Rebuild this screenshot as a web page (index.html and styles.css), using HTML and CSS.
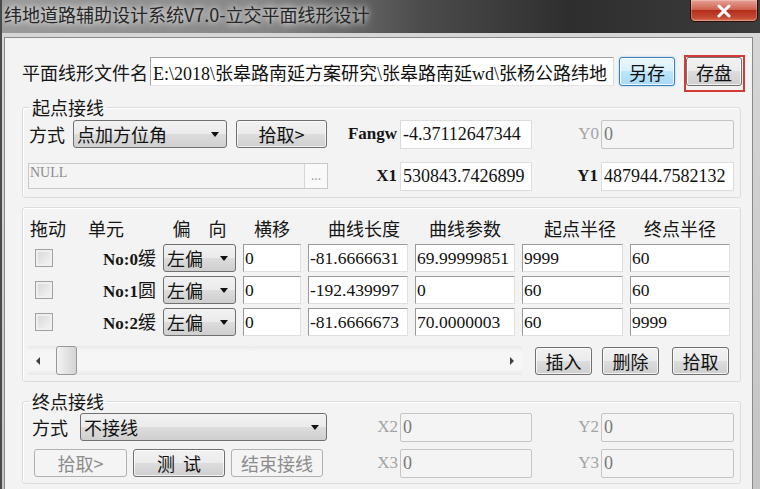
FILE: index.html
```html
<!DOCTYPE html>
<html lang="zh-CN">
<head>
    <meta charset="UTF-8">
    <title>纬地道路辅助设计系统V7.0-立交平面线形设计</title>
    <link rel="stylesheet" href="styles.css">
</head>
<body>
<div class="window">
    <div class="titlebar">
        <span class="title">纬地道路辅助设计系统V7.0-立交平面线形设计</span>
        <button class="close-btn">
            <svg width="16" height="14" viewBox="0 0 16 14"><path d="M3 2 L13 12 M13 2 L3 12" stroke="#fff" stroke-width="3" stroke-linecap="round"/></svg>
        </button>
    </div>
    <div class="frame">
        <div class="client">
            <div class="file-row">
                <label class="lbl" for="file">平面线形文件名</label>
                <input id="file" class="txt path" type="text" value="E:\2018\张皋路南延方案研究\张皋路南延wd\张杨公路纬地">
                <button class="btn hot">另存</button>
                <span class="mark"><button class="btn">存盘</button></span>
            </div>

            <fieldset class="group">
                <legend>起点接线</legend>
                <div class="grid start-grid">
                    <div class="left start-mode">
                        <span class="lbl">方式</span>
                        <div class="combo combo-start">
                            <select><option>点加方位角</option><option>不接线</option></select>
                        </div>
                        <button class="btn pick">拾取&gt;</button>
                    </div>
                    <label class="tag">Fangw</label>
                    <input class="txt num" type="text" value="-4.37112647344">
                    <label class="tag off">Y0</label>
                    <input class="txt num" type="text" value="0" disabled>

                    <div class="left">
                        <div class="null-field"><span class="null-text">NULL</span><span class="dots">...</span></div>
                    </div>
                    <label class="tag">X1</label>
                    <input class="txt num" type="text" value="530843.7426899">
                    <label class="tag">Y1</label>
                    <input class="txt num" type="text" value="487944.7582132">
                </div>
            </fieldset>

            <div class="group table-group">
                <div class="table-grid">
                    <div class="th th-left">拖动</div>
                    <div class="th th-unit">单元</div>
                    <div class="th">偏　向</div>
                    <div class="th">横移</div>
                    <div class="th th-shift">曲线长度</div>
                    <div class="th">曲线参数</div>
                    <div class="th th-shift2">起点半径</div>
                    <div class="th">终点半径</div>

                    <input class="check" type="checkbox" disabled>
                    <div class="unit"><span class="mono">No:0</span>缓</div>
                    <div class="combo"><select><option>左偏</option><option>右偏</option></select></div>
                    <input class="txt cell" type="text" value="0">
                    <input class="txt cell" type="text" value="-81.6666631">
                    <input class="txt cell" type="text" value="69.99999851">
                    <input class="txt cell" type="text" value="9999">
                    <input class="txt cell" type="text" value="60">

                    <input class="check" type="checkbox" disabled>
                    <div class="unit"><span class="mono">No:1</span>圆</div>
                    <div class="combo"><select><option>左偏</option><option>右偏</option></select></div>
                    <input class="txt cell" type="text" value="0">
                    <input class="txt cell" type="text" value="-192.439997">
                    <input class="txt cell" type="text" value="0">
                    <input class="txt cell" type="text" value="60">
                    <input class="txt cell" type="text" value="60">

                    <input class="check" type="checkbox" disabled>
                    <div class="unit"><span class="mono">No:2</span>缓</div>
                    <div class="combo"><select><option>左偏</option><option>右偏</option></select></div>
                    <input class="txt cell" type="text" value="0">
                    <input class="txt cell" type="text" value="-81.6666673">
                    <input class="txt cell" type="text" value="70.0000003">
                    <input class="txt cell" type="text" value="60">
                    <input class="txt cell" type="text" value="9999">
                </div>

                <div class="scroll-row">
                    <div class="hscroll">
                        <span class="arrow arrow-l"></span>
                        <span class="thumb"></span>
                        <span class="spacer"></span>
                        <span class="arrow arrow-r"></span>
                    </div>
                    <button class="btn small b-insert">插入</button>
                    <button class="btn small b-delete">删除</button>
                    <button class="btn small b-pick">拾取</button>
                </div>
            </div>

            <fieldset class="group end-group">
                <legend>终点接线</legend>
                <div class="grid end-grid">
                    <div class="left end-mode">
                        <span class="lbl">方式</span>
                        <div class="combo combo-end">
                            <select><option>不接线</option><option>点加方位角</option></select>
                        </div>
                    </div>
                    <label class="tag off">X2</label>
                    <input class="txt num" type="text" value="0" disabled>
                    <label class="tag off">Y2</label>
                    <input class="txt num" type="text" value="0" disabled>

                    <div class="left end-buttons">
                        <button class="btn wide" disabled>拾取&gt;</button>
                        <button class="btn wide test">测 试</button>
                        <button class="btn wide" disabled>结束接线</button>
                    </div>
                    <label class="tag off">X3</label>
                    <input class="txt num" type="text" value="0" disabled>
                    <label class="tag off">Y3</label>
                    <input class="txt num" type="text" value="0" disabled>
                </div>
            </fieldset>
        </div>
    </div>
</div>
</body>
</html>
```

FILE: styles.css
```css
* {
    box-sizing: border-box;
}
body {
    margin: 0;
    width: 760px;
    height: 489px;
    overflow: hidden;
    background: #3a3a3a;
    font-family: "Noto Sans CJK SC", sans-serif;
    color: #161616;
}
.window {
    width: 760px;
    height: 489px;
    overflow: hidden;
    display: flex;
    flex-direction: column;
    border-left: 2px solid #4a4a4a;
    background: linear-gradient(to right, #9a9a9a 0%, #868686 35%, #4c4c4c 55%, #2e2e2e 75%, #3c3c3c 100%);
}
.titlebar {
    height: 33px;
    flex: none;
    display: flex;
    justify-content: space-between;
    align-items: flex-start;
    padding-left: 2px;
}
.title {
    font-size: 18px;
    line-height: 28px;
    color: #262626;
    white-space: nowrap;
    text-shadow: 0 0 6px #eeeeee, 0 0 10px #d8d8d8;
}
.close-btn {
    width: 68px;
    height: 22px;
    margin-right: 2px;
    padding: 0;
    display: flex;
    align-items: center;
    justify-content: center;
    border: 1px solid #2b0c08;
    border-top: 0;
    border-radius: 0 0 5px 5px;
    background: linear-gradient(#e6a195 0%, #d06350 45%, #b52f1d 50%, #c44a33 85%, #d97a5e 100%);
    box-shadow: inset 0 0 0 1px rgba(255, 255, 255, 0.25);
}
.frame {
    flex: 1;
    padding: 4px 7px 0 2px;
    background: linear-gradient(#d6d6d6, #c4c4c4);
}
.client {
    height: 100%;
    background: #f3f3f3;
    border: 1px solid #8a8a8a;
    border-bottom: 0;
    padding: 19px 0 0 17px;
}

/* file row */
.file-row {
    display: flex;
    align-items: center;
    height: 29px;
}
.lbl {
    font-size: 18px;
    line-height: 24px;
    white-space: nowrap;
}
.file-row .lbl {
    width: 128px;
}
.txt {
    height: 29px;
    padding: 0 2px;
    border: 1px solid #dcdcdc;
    background: #fff;
    font-family: "Liberation Serif", "Noto Sans CJK SC", serif;
    font-size: 18px;
    color: #111;
    outline: none;
    min-width: 0;
    width: 100%;
}
.txt:disabled {
    background: #f4f4f4;
    border-color: #c5c5c5;
    border-radius: 2px;
    color: #7a7a7a;
}
.path {
    width: 464px;
    font-size: 18px;
    border-color: #a5a5a5 #dadada #e6e6e6 #a5a5a5;
}
.btn {
    font-family: inherit;
    font-size: 18px;
    line-height: 22px;
    color: #111;
    height: 28px;
    padding: 0;
    border: 1px solid #707070;
    border-radius: 3px;
    background: linear-gradient(#f2f2f2 0%, #ebebeb 49%, #dddddd 50%, #cfcfcf 100%);
    box-shadow: inset 0 0 0 1px rgba(255, 255, 255, 0.7);
}
.btn:disabled {
    color: #8d8d8d;
    border-color: #adb2b5;
    background: #f4f4f4;
    box-shadow: none;
}
.btn.hot {
    border-color: #3c7fb1;
    background: linear-gradient(#eaf6fd 0%, #d9f0fc 49%, #bee6fd 50%, #a7d9f5 100%);
    box-shadow: 0 0 2px #7cc3ec, inset 0 0 0 1px rgba(255, 255, 255, 0.8);
}
.file-row .btn {
    width: 56px;
    height: 29px;
}
.file-row .hot {
    margin-left: 5px;
}
.mark {
    position: relative;
    display: flex;
    margin-left: 11px;
}
.mark::after {
    content: "";
    position: absolute;
    left: -2px;
    top: -2px;
    right: -3px;
    bottom: -6px;
    border: 2px solid #d33b36;
}

/* group boxes */
.group {
    width: 719px;
    margin: 10px 0 0 0;
    padding: 1px 5px 6px;
    border: 1px solid #d8dde0;
    border-radius: 3px;
    box-shadow: inset 1px 1px 0 #fff;
}
.group legend {
    font-size: 18px;
    line-height: 22px;
    padding: 0 2px;
    margin-left: 2px;
}
.grid {
    display: grid;
    grid-template-columns: 306px 66px 132px 69px 133px;
    grid-auto-rows: 30px;
    row-gap: 12px;
    align-items: center;
}
.left {
    display: flex;
    align-items: center;
}
.start-mode {
    padding-left: 1px;
}
.start-mode .lbl {
    margin-right: 8px;
}
.combo {
    position: relative;
    height: 28px;
}
.combo select {
    -webkit-appearance: none;
    appearance: none;
    width: 100%;
    height: 100%;
    padding: 0 0 0 3px;
    font-family: inherit;
    font-size: 18px;
    color: #111;
    border: 1px solid #707070;
    border-radius: 3px;
    background: linear-gradient(#f2f2f2 0%, #ebebeb 49%, #dddddd 50%, #cfcfcf 100%);
    outline: none;
}
.combo::after {
    content: "";
    position: absolute;
    right: 8px;
    top: 12px;
    border-left: 4.5px solid transparent;
    border-right: 4.5px solid transparent;
    border-top: 5px solid #111;
    pointer-events: none;
}
.combo-start {
    width: 154px;
}
.pick {
    width: 91px;
    margin-left: 9px;
}
.tag {
    text-align: right;
    padding-right: 3px;
    font-family: "Liberation Serif", serif;
    font-size: 17px;
    font-weight: bold;
    white-space: nowrap;
}
.tag.off {
    font-weight: normal;
    color: #a3a3a3;
    padding-right: 2px;
}
.null-field {
    width: 300px;
    height: 26px;
    display: flex;
    border: 1px solid #c9c9c9;
    background: #f4f4f4;
}
.null-text {
    flex: 1;
    padding-left: 1px;
    font-family: "Liberation Serif", serif;
    font-size: 14px;
    line-height: 18px;
    color: #8c8c8c;
}
.dots {
    width: 23px;
    border-left: 1px solid #d6d6d6;
    background: #f9f9f9;
    color: #a0a0a0;
    font-size: 12px;
    line-height: 22px;
    text-align: center;
}

/* table */
.table-group {
    margin-top: 9px;
    padding: 9px 5px 6px;
}
.table-grid {
    display: grid;
    grid-template-columns: 45px 76px 73px 58px 100px 100px 101px 100px;
    grid-template-rows: 23px repeat(3, 28px);
    column-gap: 7px;
    row-gap: 4px;
    align-items: center;
}
.th {
    font-size: 18px;
    line-height: 23px;
    text-align: center;
    white-space: nowrap;
}
.th-left {
    text-align: left;
    padding-left: 2px;
}
.th-unit {
    text-align: left;
    padding-left: 8px;
}
.th-shift {
    padding-left: 12px;
}
.th-shift2 {
    padding-left: 15px;
}
.check {
    -webkit-appearance: none;
    appearance: none;
    width: 18px;
    height: 18px;
    margin: 0 0 0 7px;
    border: 1px solid #a2a2a2;
    background: linear-gradient(135deg, #d6d6d6, #f6f6f6);
    box-shadow: inset 0 0 0 2px #efefef;
}
.unit {
    text-align: right;
    font-size: 18px;
    line-height: 24px;
    white-space: nowrap;
}
.unit .mono {
    font-family: "Liberation Serif", serif;
    font-weight: bold;
    font-size: 17px;
}
.cell {
    height: 28px;
    padding: 0 1px;
    font-size: 17.5px;
    border-color: #9a9a9a #e0e0e0 #e0e0e0 #9a9a9a;
}
.scroll-row {
    display: flex;
    align-items: center;
    height: 29px;
    margin-top: 10px;
}
.hscroll {
    width: 494px;
    height: 29px;
    display: flex;
    align-items: center;
    background: linear-gradient(#e9e9e9, #f6f6f6 20%, #f6f6f6 80%, #e9e9e9);
}
.arrow {
    width: 20px;
    height: 10px;
    display: flex;
    justify-content: center;
    align-items: center;
}
.arrow-l::before {
    content: "";
    border-top: 4px solid transparent;
    border-bottom: 4px solid transparent;
    border-right: 4px solid #404040;
}
.arrow-r::before {
    content: "";
    border-top: 4px solid transparent;
    border-bottom: 4px solid transparent;
    border-left: 4px solid #404040;
}
.thumb {
    width: 21px;
    height: 29px;
    margin-left: 8px;
    border: 1px solid #979797;
    border-radius: 3px;
    background: linear-gradient(to right, #f4f4f4, #e3e3e3 50%, #d4d4d4);
}
.spacer {
    flex: 1;
}
.btn.small {
    width: 57px;
}
.b-insert {
    margin-left: 13px;
}
.b-delete {
    margin-left: 10px;
}
.b-pick {
    margin-left: 13px;
}

/* end group */
.end-group {
    margin-top: 8px;
}
.end-grid {
    grid-auto-rows: 28px;
    row-gap: 8px;
}
.end-mode {
    padding-left: 4px;
}
.combo-end {
    width: 247px;
    margin-left: 12px;
}
.end-buttons {
    padding-left: 6px;
    gap: 6px;
}
.btn.wide {
    width: 92px;
}
.end-buttons .btn:first-child {
    width: 93px;
}
.test {
    word-spacing: 4px;
}
```
